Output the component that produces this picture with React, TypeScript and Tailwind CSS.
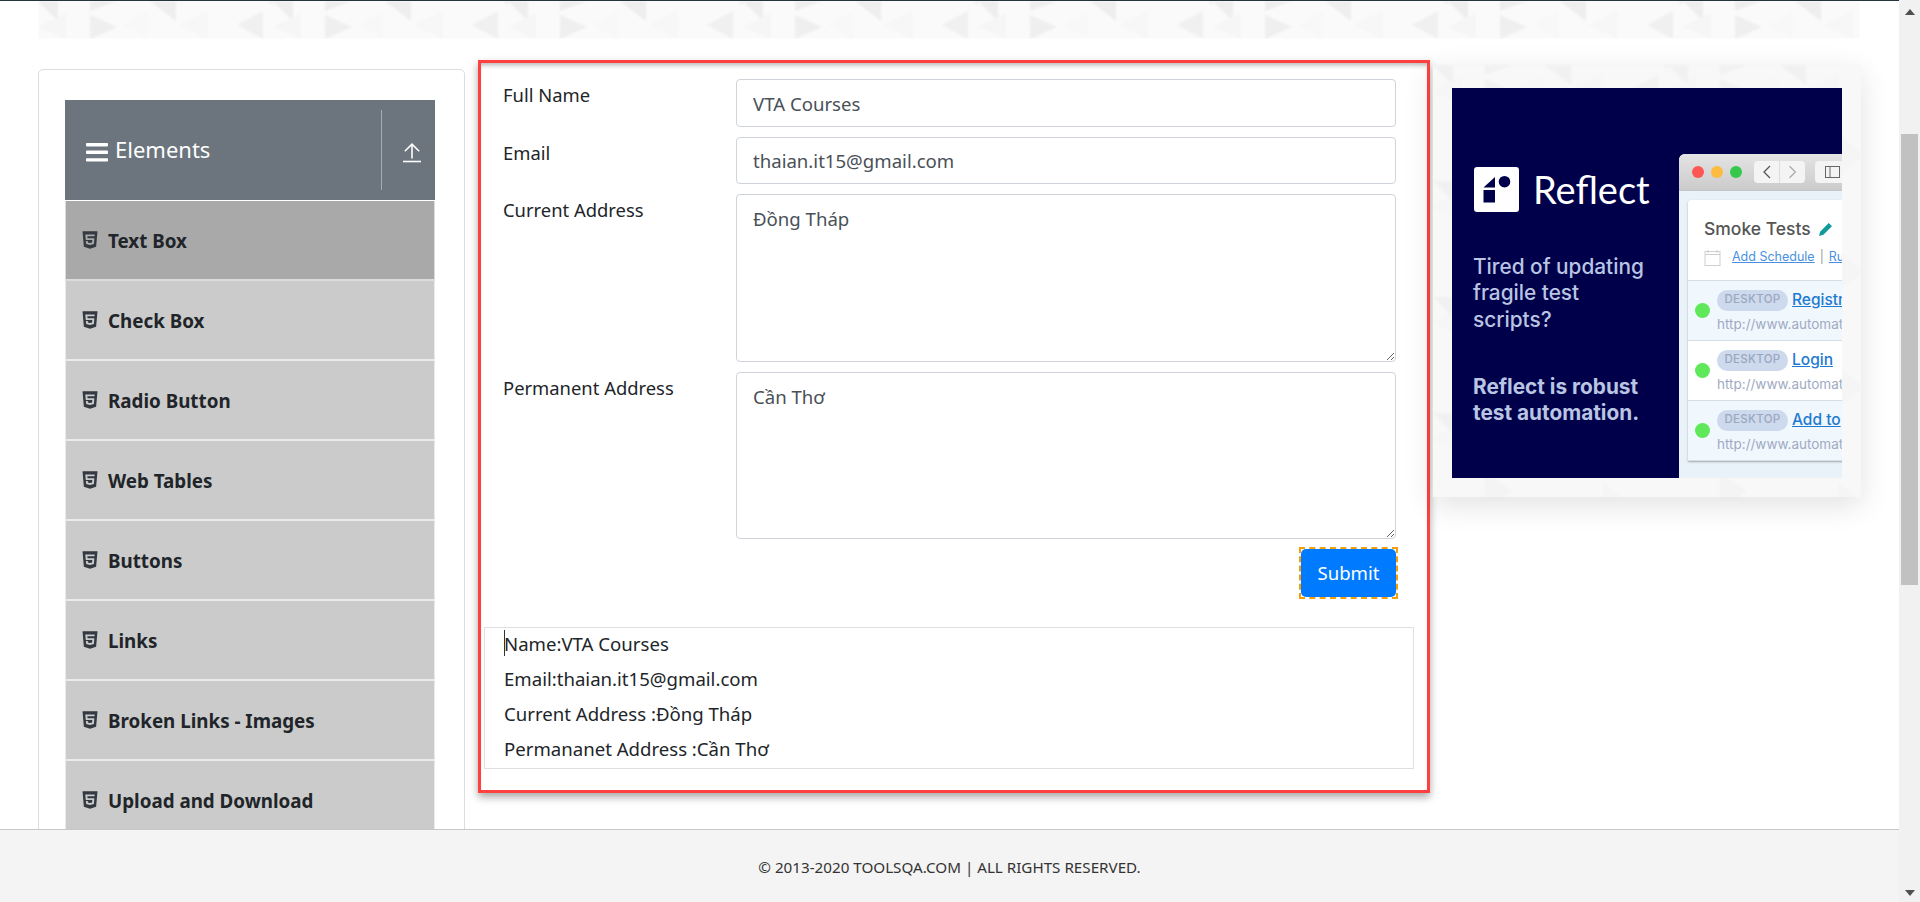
import { FaHtml5 } from "react-icons/fa"

const sideItems = [
  "Text Box",
  "Check Box",
  "Radio Button",
  "Web Tables",
  "Buttons",
  "Links",
  "Broken Links - Images",
  "Upload and Download",
]

const adRows = [
  { link: "Registr", tint: true },
  { link: "Login", tint: false },
  { link: "Add to", tint: true },
]

function Pattern({ id, opacity }: { id: string; opacity: number }) {
  return (
    <svg className="block h-full w-full blur-[1px]" style={{ opacity }}>
      <defs>
        <pattern id={id} width="235" height="116" patternUnits="userSpaceOnUse">
          <rect width="235" height="116" fill="#fafafa" />
          <polygon points="52,0 79,0 52,10" fill="#eeeeee" />
          <polygon points="52,14 79,26 52,38" fill="#efefef" />
          <polygon points="112,0 138,0 138,20" fill="#eeeeee" />
          <polygon points="225,10 225,38 199,24" fill="#f0f0f0" />
          <polygon points="229,0 235,0 235,4" fill="#eeeeee" />
          <polygon points="0,0 20,0 20,20" fill="#eeeeee" />
          <polygon points="0,26 28,12 28,38" fill="#f6f6f6" />
          <polygon points="140,24 170,10 170,38" fill="#f7f7f7" />
          <polygon points="85,24 110,10 110,38" fill="#f8f8f8" />
          <polygon points="52,60 79,78 52,98" fill="#f3f3f3" />
          <polygon points="170,70 196,90 170,110" fill="#f5f5f5" />
        </pattern>
      </defs>
      <rect width="100%" height="100%" fill={`url(#${id})`} />
    </svg>
  )
}

function UploadIcon() {
  return (
    <svg width="18" height="20" viewBox="0 0 18 20" fill="none" stroke="#fff" strokeWidth="1.6">
      <path d="M0 18.5h18" />
      <path d="M9 15.5V1.5" />
      <path d="M1.8 8.2 9 1.2l7.2 7" />
    </svg>
  )
}

function AdWindow() {
  return (
    <div className="mt-[66px] min-w-0 flex-1 overflow-hidden rounded-tl-[6px] bg-[#e9f1f9]">
      <div className="flex h-[37px] items-center border-b border-[#c4c4c4] bg-gradient-to-b from-[#e4e4e4] to-[#cbcbcb] pl-[13px]">
        <span className="h-3 w-3 shrink-0 rounded-full bg-[#fc5753]" />
        <span className="ml-[7px] h-3 w-3 shrink-0 rounded-full bg-[#fdbc40]" />
        <span className="ml-[7px] h-3 w-3 shrink-0 rounded-full bg-[#36c84b]" />
        <div className="ml-[12px] flex h-[22px] w-[51px] shrink-0 rounded-[4px] bg-[#f4f4f4]">
          <svg width="25" height="22" viewBox="0 0 25 22" fill="none" stroke="#555" strokeWidth="1.3">
            <path d="M16 5l-6 6 6 6" />
          </svg>
          <svg className="border-l border-[#ddd]" width="26" height="22" viewBox="0 0 26 22" fill="none" stroke="#aaa" strokeWidth="1.3">
            <path d="M10 5l6 6-6 6" />
          </svg>
        </div>
        <div className="ml-[10px] flex h-[22px] w-[40px] shrink-0 items-center rounded-[4px] bg-[#f4f4f4] pl-[10px]">
          <svg width="16" height="12" viewBox="0 0 16 12" fill="none" stroke="#666">
            <rect x="0.5" y="0.5" width="14" height="11" />
            <path d="M5 0.5v11" />
          </svg>
        </div>
      </div>
      <div className="ml-[9px] mt-[9px] w-[170px] rounded-tl-[3px] bg-white shadow-[0_1px_2px_rgba(0,0,0,0.3)]">
        <div className="h-[81px] border-b border-[#d5dde6] pl-[16px] pt-[17px]">
          <div className="flex items-center font-['Inter',sans-serif] text-[17.5px] leading-[24px] font-medium whitespace-nowrap text-[#555555]">
            Smoke Tests
            <svg className="ml-[7px]" width="15" height="15" viewBox="0 0 14 14" fill="#0f9a9c">
              <path d="M10 1l3 3-8 8-4 1 1-4z" />
            </svg>
          </div>
          <div className="mt-[7px] flex items-center font-['Inter',sans-serif] text-[12.5px] whitespace-nowrap text-[#4a90e2]">
            <svg className="shrink-0" width="17" height="17" viewBox="0 0 17 17" fill="none" stroke="#cfcfcf">
              <rect x="1" y="2.5" width="15" height="14" />
              <path d="M1 5.5h15M4 1v3M13 1v3" />
            </svg>
            <span className="ml-[11px] underline">Add Schedule</span>
            <span className="mx-[5px] text-[#999]">|</span>
            <span className="underline">Ru</span>
          </div>
        </div>
        {adRows.map((row) => (
          <div
            key={row.link}
            className={`flex h-[60px] items-center border-b border-[#d5dde6] pl-[7px] ${row.tint ? "bg-[#f0f7fd]" : "bg-white"}`}
          >
            <span className="h-[15px] w-[15px] shrink-0 rounded-full bg-[#5ee85a]" />
            <div className="ml-[7px] font-['Inter',sans-serif] whitespace-nowrap">
              <div className="flex items-center">
                <span className="flex h-[21px] w-[71px] shrink-0 items-center justify-center rounded-full bg-[#cdd9ec] text-[11.5px] font-medium tracking-[0.3px] text-[#9aa7c0]">
                  DESKTOP
                </span>
                <span className="ml-[4px] text-[15.5px] font-medium text-[#1e7bd0] underline">{row.link}</span>
              </div>
              <div className="mt-[3px] text-[13.5px] leading-[18px] text-[#a0aac4]">http://www.automat</div>
            </div>
          </div>
        ))}
      </div>
    </div>
  )
}

function AdCard() {
  return (
    <div className="relative ml-[3px] mt-[5px] h-[432px] w-[428px] shrink-0 bg-[#f6f6f6] shadow-[0_8px_28px_rgba(0,0,0,0.12)]">
      <div className="absolute inset-0">
        <Pattern id="adBg" opacity={0.5} />
      </div>
      <div className="relative ml-[19px] mt-[23px] flex h-[390px] w-[390px] overflow-hidden bg-[#00004a] font-['Inter',sans-serif] text-[#b9c5e2]">
        <div className="w-[227px] shrink-0 pl-[21px]">
          <div className="mt-[79px] flex items-center">
            <svg className="ml-[1px] shrink-0" width="45" height="45" viewBox="0 0 45 45">
              <rect width="45" height="45" rx="3" fill="#fff" />
              <rect x="9.5" y="23" width="11.5" height="12.5" fill="#00004a" />
              <polygon points="9.5,20.5 21,20.5 21,10" fill="#00004a" />
              <circle cx="30.5" cy="14.7" r="5.8" fill="#00004a" />
            </svg>
            <span className="ml-[14px] font-['Lato',sans-serif] text-[38px] leading-[45px] text-white">Reflect</span>
          </div>
          <p className="mt-[42px] text-[20.8px] leading-[26.3px] font-medium whitespace-nowrap">
            Tired of updating
            <br />
            fragile test
            <br />
            scripts?
          </p>
          <p className="mt-[41px] text-[20.8px] leading-[26.3px] font-bold whitespace-nowrap">
            Reflect is robust
            <br />
            test automation.
          </p>
        </div>
        <AdWindow />
      </div>
    </div>
  )
}

function Sidebar() {
  return (
    <div className="ml-[38px] mt-[9px] w-[427px] shrink-0 rounded-[5px] border border-[#dddddd] px-[26px] pt-[30px]">
      <div className="flex h-[100px] w-[370px] bg-[#6c757d]">
        <div className="flex flex-1 items-center pb-[2px] pl-[21px]">
          <svg className="mt-[6px]" width="22" height="19" viewBox="0 0 22 19" fill="#fff">
            <rect width="22" height="3.4" rx="0.8" />
            <rect y="7.6" width="22" height="3.4" rx="0.8" />
            <rect y="15.2" width="22" height="3.4" rx="0.8" />
          </svg>
          <span className="ml-[7px] font-['Noto_Sans',sans-serif] text-[22px] leading-[30px] text-white">Elements</span>
        </div>
        <div className="my-[10px] flex w-[54px] items-center justify-center border-l border-[#a5abb1] pl-[7px] pt-[5px]">
          <UploadIcon />
        </div>
      </div>
      <div className="mt-px w-[370px] font-['Noto_Sans',sans-serif]">
        {sideItems.map((item, i) => (
          <div
            key={item}
            className={`flex h-[80px] items-center border-x border-b-2 border-white/60 pl-[14px] pt-[3px] text-[18.8px] font-bold text-[#212529] ${i === 0 ? "bg-[#a9a9a9]" : "bg-[#cbcbcb]"}`}
          >
            <FaHtml5 className="mb-[4px] text-[20px] text-[#343a40]" />
            <span className="ml-[8px]">{item}</span>
          </div>
        ))}
      </div>
    </div>
  )
}

function FormRow({ label, children, mt }: { label: string; children: React.ReactNode; mt: string }) {
  return (
    <div className={`flex ${mt}`}>
      <label className="w-[255px] shrink-0 pl-[22px] text-[18.4px] leading-[32px] whitespace-nowrap text-[#212529]">
        {label}
      </label>
      {children}
    </div>
  )
}

function FormPanel() {
  const inputCls =
    "w-[660px] rounded-[4px] border border-[#ced4da] bg-white px-[16px] text-[18.6px] text-[#495057] outline-none"
  return (
    <div className="ml-[13px] h-[733px] w-[952px] shrink-0 border-[3px] border-[#ff4040] pt-[16px] font-['Noto_Sans',sans-serif] shadow-[inset_0_5px_5px_-3px_rgba(0,0,0,0.3),0_4px_8px_rgba(0,0,0,0.35)]">
      <FormRow label="Full Name" mt="mt-0">
        <input className={`${inputCls} h-[48px]`} defaultValue="VTA Courses" />
      </FormRow>
      <FormRow label="Email" mt="mt-[10px]">
        <input className={`${inputCls} h-[47px]`} defaultValue="thaian.it15@gmail.com" />
      </FormRow>
      <FormRow label="Current Address" mt="mt-[10px]">
        <textarea className={`${inputCls} block h-[168px] py-[10px] leading-[27px]`} defaultValue="Đồng Tháp" />
      </FormRow>
      <FormRow label="Permanent Address" mt="mt-[10px]">
        <textarea className={`${inputCls} block h-[167px] py-[10px] leading-[27px]`} defaultValue="Cần Thơ" />
      </FormRow>
      <div className="mt-[8px] flex justify-end pr-[29px]">
        <div className="h-[52px] w-[99px] border-2 border-dashed border-[#f59e0b]">
          <button className="h-full w-full rounded-[5px] bg-[#007bff] text-[18.6px] text-white">Submit</button>
        </div>
      </div>
      <div className="relative ml-[3px] mt-[28px] h-[142px] w-[930px] border border-[#dfdfdf] pl-[19px] text-[18.6px] leading-[35px] whitespace-nowrap text-[#212529]">
        <span className="absolute left-[19px] top-[2px] h-[26px] w-px bg-[#333]" />
        <div className="-mt-[2px]">
          <p>Name:VTA Courses</p>
          <p>Email:thaian.it15@gmail.com</p>
          <p>Current Address :Đồng Tháp</p>
          <p>Permananet Address :Cần Thơ</p>
        </div>
      </div>
    </div>
  )
}

function Scrollbar() {
  return (
    <div className="flex h-full w-[21px] shrink-0 flex-col items-center bg-[#f1f1f1]">
      <svg className="mt-[9px]" width="10" height="6" viewBox="0 0 10 6" fill="#505050">
        <path d="M5 0l5 6H0z" />
      </svg>
      <div className="mt-[119px] h-[451px] w-[17px] bg-[#c1c1c1]" />
      <svg className="mb-[6px] mt-auto" width="10" height="6" viewBox="0 0 10 6" fill="#505050">
        <path d="M0 0h10L5 6z" />
      </svg>
    </div>
  )
}

export default function App() {
  return (
    <div className="flex h-[902px] w-[1920px] overflow-hidden bg-white">
      <div className="flex min-w-0 flex-1 flex-col">
        <div className="h-px shrink-0 bg-[#253540]" />
        <div className="min-h-0 flex-1 overflow-hidden">
          <div className="ml-[38px] mr-[39px] h-[38px] overflow-hidden">
            <Pattern id="bannerBg" opacity={1} />
          </div>
          <div className="flex items-start pt-[21px]">
            <Sidebar />
            <FormPanel />
            <AdCard />
          </div>
        </div>
        <footer className="flex h-[73px] shrink-0 items-center justify-center border-t border-[#c8c8c8] bg-[#f4f4f4] pt-[2px] font-['Noto_Sans',sans-serif] text-[15.2px] text-[#333]">
          © 2013-2020 TOOLSQA.COM | ALL RIGHTS RESERVED.
        </footer>
      </div>
      <Scrollbar />
    </div>
  )
}
